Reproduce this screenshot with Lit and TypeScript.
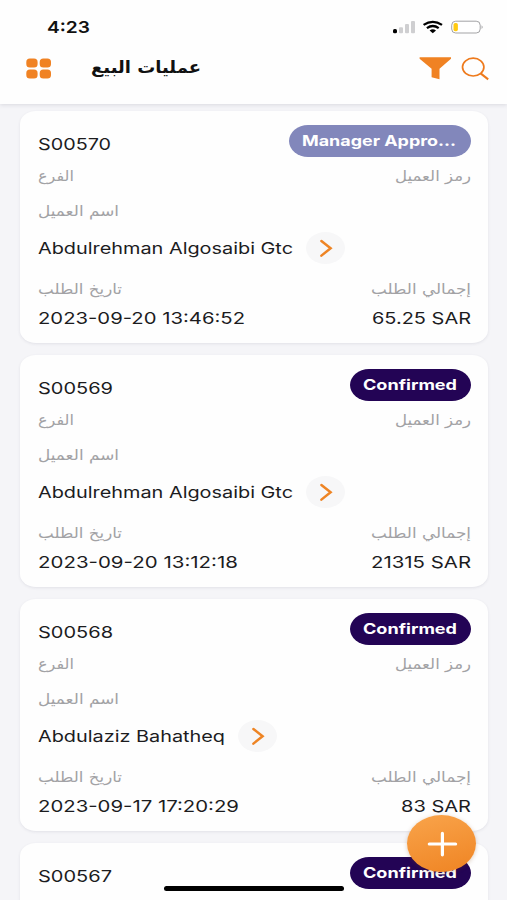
import { LitElement, html, css, svg, nothing } from "lit";
import { customElement, property } from "lit/decorators.js";

interface OrderDetails {
  customer: string;
  customerWidth: number;
  date: string;
  dateWidth: number;
  total: string;
  totalWidth: number;
}

interface Order {
  id: string;
  idWidth: number;
  status: "pending" | "confirmed";
  details?: OrderDetails;
}

const ORDERS: Order[] = [
  {
    id: "S00570", idWidth: 73, status: "pending",
    details: { customer: "Abdulrehman Algosaibi Gtc", customerWidth: 255, date: "2023-09-20 13:46:52", dateWidth: 207, total: "65.25 SAR", totalWidth: 99 },
  },
  {
    id: "S00569", idWidth: 75, status: "confirmed",
    details: { customer: "Abdulrehman Algosaibi Gtc", customerWidth: 255, date: "2023-09-20 13:12:18", dateWidth: 200, total: "21315 SAR", totalWidth: 100 },
  },
  {
    id: "S00568", idWidth: 75, status: "confirmed",
    details: { customer: "Abdulaziz Bahatheq", customerWidth: 187, date: "2023-09-17 17:20:29", dateWidth: 201, total: "83 SAR", totalWidth: 70 },
  },
  { id: "S00567", idWidth: 74, status: "confirmed" },
];

/** A single line of text set to an exact width, baseline 15px below its top. */
@customElement("fit-text")
export class FitText extends LitElement {
  @property() text = "";
  @property({ type: Number }) width = 50;

  static styles = css`
    :host { display: block; flex: none; height: 20px; }
    svg { display: block; overflow: visible; }
    text { fill: currentColor; }
  `;

  render() {
    return html`<svg width=${this.width} height="20">
      ${svg`<text x="0" y="15" textLength=${this.width} lengthAdjust="spacingAndGlyphs">${this.text}</text>`}
    </svg>`;
  }
}

@customElement("order-card")
export class OrderCard extends LitElement {
  @property({ attribute: false }) order!: Order;

  static styles = css`
    :host {
      display: block;
      box-sizing: border-box;
      height: 232px;
      padding: 13.5px 17px 0 17.5px;
      background: #fefefe;
      border-radius: 16px / 13px;
      box-shadow: 0 1px 3px rgba(60, 60, 90, 0.1);
      color: #1c1c1e;
      font-size: 16px;
    }
    .row { display: flex; justify-content: space-between; }
    .id { margin-top: 10.5px; }
    .badge {
      box-sizing: border-box;
      height: 32px;
      padding: 6.5px 13.5px 0;
      border-radius: 19px / 16px;
      background: #230455;
      color: #fff;
      font-size: 14.5px;
      font-weight: 700;
    }
    .pending { background: #8287bb; padding-right: 14.5px; }
    .clip { height: 18px; overflow: hidden; }
    .label { color: #a2a2a5; font-family: "DejaVu Sans", sans-serif; font-size: 14.5px; }
    .codes { margin-top: 9.5px; }
    .name { margin-top: 14.5px; }
    .customer { justify-content: flex-start; align-items: center; height: 32px; margin-top: 11px; gap: 13px; }
    .customer fit-text { margin-top: 3px; }
    .go { width: 39px; height: 32px; border-radius: 50%; background: #f7f7f8; }
    .go svg { display: block; }
    .totals { margin-top: 15px; }
    .values { margin-top: 10px; font-size: 16.5px; }
  `;

  private renderDetails(d: OrderDetails) {
    return html`
      <div class="row label codes">
        <fit-text text="الفرع" .width=${36}></fit-text>
        <fit-text text="رمز العميل" .width=${76}></fit-text>
      </div>
      <div class="row label name"><fit-text text="اسم العميل" .width=${81}></fit-text></div>
      <div class="row customer">
        <fit-text .text=${d.customer} .width=${d.customerWidth}></fit-text>
        <div class="go">
          <svg width="39" height="32" viewBox="0 0 39 32" fill="none" stroke="#ee8424" stroke-width="2.5" stroke-linecap="round">
            <path d="M15.4 9L24.6 16.2L15.4 23.6" />
          </svg>
        </div>
      </div>
      <div class="row label totals">
        <fit-text text="تاريخ الطلب" .width=${84}></fit-text>
        <fit-text text="إجمالي الطلب" .width=${100}></fit-text>
      </div>
      <div class="row values">
        <fit-text .text=${d.date} .width=${d.dateWidth}></fit-text>
        <fit-text .text=${d.total} .width=${d.totalWidth}></fit-text>
      </div>
    `;
  }

  render() {
    const o = this.order;
    const pending = o.status === "pending";
    return html`
      <div class="row">
        <fit-text class="id" .text=${o.id} .width=${o.idWidth}></fit-text>
        <div class="badge ${o.status}">
          <div class="clip">
            <fit-text .text=${pending ? "Manager Appro..." : "Confirmed"} .width=${pending ? 154 : 94}></fit-text>
          </div>
        </div>
      </div>
      ${o.details ? this.renderDetails(o.details) : nothing}
    `;
  }
}

@customElement("app-root")
export class AppRoot extends LitElement {
  static styles = css`
    :host {
      display: flex;
      flex-direction: column;
      position: relative;
      height: 900px;
      overflow: hidden;
      background: #f5f5f8;
      font-family: Inter, "DejaVu Sans", sans-serif;
    }
    header {
      flex: none;
      box-sizing: border-box;
      height: 104px;
      background: #fefefe;
      box-shadow: 0 1px 4px rgba(60, 60, 80, 0.14);
      color: #111;
    }
    .bar { display: flex; align-items: flex-start; }
    .status { height: 56px; padding: 18px 22px 0 46.5px; box-sizing: border-box; justify-content: space-between; font-size: 16.5px; font-weight: 600; }
    .nav { padding: 0 18px 0 26px; }
    .grid { margin-top: 1.5px; }
    .title { margin: 2px 0 0 39px; font-family: "DejaVu Sans", sans-serif; font-weight: 700; font-size: 16.5px; }
    .actions { margin-left: auto; }
    main { display: flex; flex-direction: column; gap: 12px; padding: 7px 19.5px 0 20px; }
    order-card { flex: none; }
    svg { display: block; flex: none; }
    .fab {
      position: absolute;
      left: 407px;
      top: 815px;
      width: 69px;
      height: 57px;
      border-radius: 50%;
      background: linear-gradient(165deg, #f9a44b, #ef8423);
      box-shadow: 0 1px 4px rgba(120, 60, 0, 0.25);
    }
    .home { position: absolute; left: 164px; top: 886px; width: 180px; height: 5px; border-radius: 3px; background: #000; }
  `;

  render() {
    return html`
      <header>
        <div class="bar status">
          <fit-text text="4:23" .width=${43}></fit-text>
          <svg width="92" height="20" viewBox="0 0 92 20">
            <g fill="#cfcfd1">
              <rect x="6" y="9.3" width="4" height="6" rx="1" />
              <rect x="12" y="6" width="4" height="9.3" rx="1" />
              <rect x="18" y="3" width="4" height="12.3" rx="1" />
            </g>
            <rect x="0" y="11" width="4" height="4.3" rx="1.6" fill="#000" />
            <g fill="none" stroke="#000" stroke-width="2.3">
              <path d="M30.6 6.9Q39.8 0.8 49 6.9" />
              <path d="M33.9 10.1Q39.8 5.8 45.7 10.1" />
            </g>
            <path d="M36.6 12.4Q39.8 10.3 43 12.4L39.8 15.3Z" fill="#000" />
            <rect x="58.7" y="3.2" width="28.5" height="11.8" rx="4" fill="#fff" stroke="#a3a3a5" />
            <rect x="60.5" y="5" width="4.4" height="8.2" rx="1.8" fill="#ffca12" />
            <path d="M88.6 7.2Q90.6 9.1 88.6 11Z" fill="#99999b" />
          </svg>
        </div>
        <div class="bar nav">
          <svg class="grid" width="26" height="21" viewBox="0 0 26 21" fill="#f08223">
            <rect x="0.3" y="0.4" width="11.3" height="9.2" rx="3.6" />
            <rect x="13.7" y="0.4" width="11.3" height="9.2" rx="3.6" />
            <rect x="0.3" y="11.4" width="11.3" height="9.2" rx="3.6" />
            <rect x="13.7" y="11.4" width="11.3" height="9.2" rx="3.6" />
          </svg>
          <fit-text class="title" text="عمليات البيع" .width=${110}></fit-text>
          <svg class="actions" width="70" height="25" viewBox="0 0 70 25">
            <path d="M0.6 1.3H32V2.8L20.5 12.8V23.3L12.6 21.2V12.8L0.6 2.8Z" fill="#f08223" />
            <g fill="none" stroke="#ee7a1c" stroke-width="1.7">
              <ellipse cx="54.2" cy="11.1" rx="10.7" ry="8.9" />
              <path d="M61.6 17.4L69.2 23.4" stroke-width="2" />
            </g>
          </svg>
        </div>
      </header>
      <main>${ORDERS.map((o) => html`<order-card .order=${o}></order-card>`)}</main>
      <div class="fab">
        <svg width="69" height="56" viewBox="0 0 69 56" stroke="#fff" stroke-width="3.2" stroke-linecap="round">
          <path d="M22.3 29H48.6M35.4 18.4V39.8" />
        </svg>
      </div>
      <div class="home"></div>
    `;
  }
}
